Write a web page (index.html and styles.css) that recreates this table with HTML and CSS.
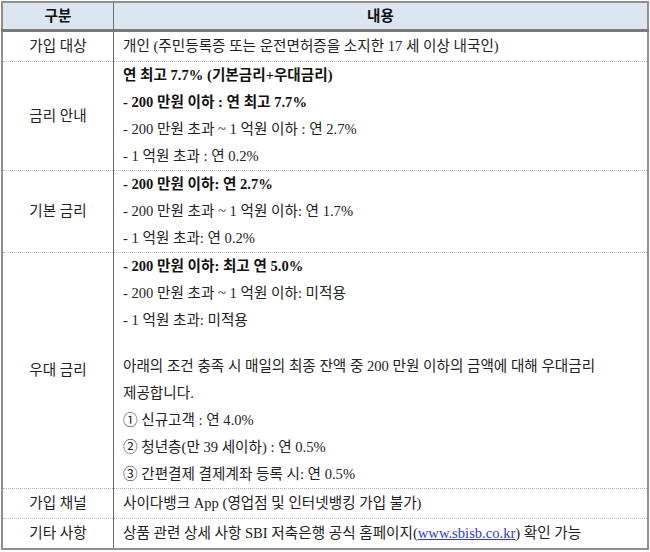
FILE: index.html
```html
<!DOCTYPE html>
<html lang="ko">
<head>
<meta charset="utf-8">
<link rel="stylesheet" href="styles.css">
</head>
<body>
<table class="info">
  <thead>
    <tr>
      <th class="col-key">구분</th>
      <th class="col-val">내용</th>
    </tr>
  </thead>
  <tbody>
    <tr>
      <td class="key">가입 대상</td>
      <td class="val single">개인 (주민등록증 또는 운전면허증을 소지한 17 세 이상 내국인)</td>
    </tr>
    <tr>
      <td class="key">금리 안내</td>
      <td class="val">
        <div class="line b">연 최고 7.7% (기본금리+우대금리)</div>
        <div class="line b">- 200 만원 이하 : 연 최고 7.7%</div>
        <div class="line">- 200 만원 초과 ~ 1 억원 이하 : 연 2.7%</div>
        <div class="line">- 1 억원 초과 : 연 0.2%</div>
      </td>
    </tr>
    <tr>
      <td class="key">기본 금리</td>
      <td class="val">
        <div class="line b">- 200 만원 이하: 연 2.7%</div>
        <div class="line">- 200 만원 초과 ~ 1 억원 이하: 연 1.7%</div>
        <div class="line">- 1 억원 초과: 연 0.2%</div>
      </td>
    </tr>
    <tr>
      <td class="key">우대 금리</td>
      <td class="val">
        <div class="line b">- 200 만원 이하: 최고 연 5.0%</div>
        <div class="line">- 200 만원 초과 ~ 1 억원 이하: 미적용</div>
        <div class="line">- 1 억원 초과: 미적용</div>
        <div class="blank"></div>
        <div class="line">아래의 조건 충족 시 매일의 최종 잔액 중 200 만원 이하의 금액에 대해 우대금리</div>
        <div class="line">제공합니다.</div>
        <div class="line">① 신규고객 : 연 4.0%</div>
        <div class="line">② 청년층(만 39 세이하) : 연 0.5%</div>
        <div class="line">③ 간편결제 결제계좌 등록 시: 연 0.5%</div>
      </td>
    </tr>
    <tr>
      <td class="key">가입 채널</td>
      <td class="val single">사이다뱅크 App (영업점 및 인터넷뱅킹 가입 불가)</td>
    </tr>
    <tr>
      <td class="key">기타 사항</td>
      <td class="val single">상품 관련 상세 사항 SBI 저축은행 공식 홈페이지(<a class="link" href="#">www.sbisb.co.kr</a>) 확인 가능</td>
    </tr>
  </tbody>
</table>
</body>
</html>
```
FILE: styles.css
```css
html, body {
  margin: 0;
  padding: 0;
  background: #ffffff;
}
body {
  padding: 1px;
  font-family: "Liberation Serif", "Noto Sans CJK KR", serif;
  font-size: 14.6px;
  color: #222222;
}
.info {
  width: 648px;
  border-collapse: collapse;
  border: 2px solid #8f8f8f;
  table-layout: fixed;
}
.info th {
  background: #dce6f1;
  font-weight: bold;
  color: #111;
  height: 26px;
  padding: 0;
  border-bottom: 3px solid #7a7a7a;
  text-align: center;
  line-height: 26px;
}
.col-key {
  width: 110px;
  border-right: 1px solid #6a6a6a;
}
.info td {
  border-top: 1px dotted #b5b5b5;
  padding: 0 9px;
  line-height: 27px;
  vertical-align: middle;
}
.info td.key {
  border-right: 1px solid #6a6a6a;
  text-align: center;
  padding: 0;
}
.info td.single {
  height: 29px;
}
.line {
  white-space: nowrap;
}
.b {
  font-weight: bold;
  color: #111;
}
.blank {
  height: 19px;
}
.link {
  color: #2a3bd6;
  text-decoration: underline;
}
```
